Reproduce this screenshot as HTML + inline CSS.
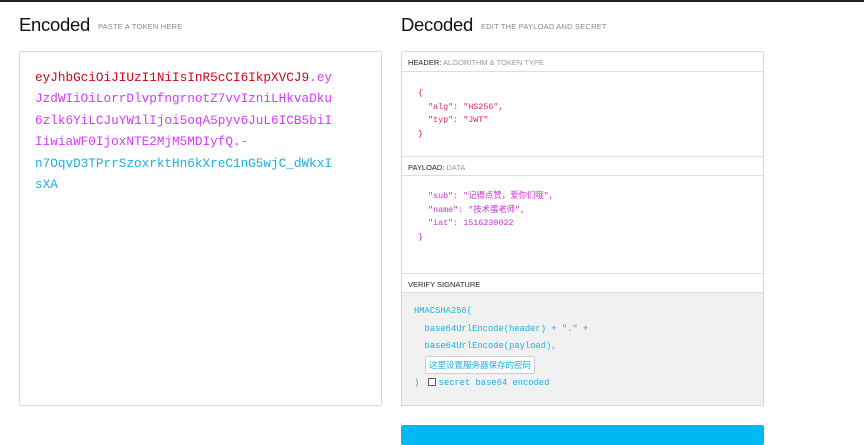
<!DOCTYPE html>
<html><head><meta charset="utf-8"><style>
*{margin:0;padding:0;box-sizing:border-box}
body{width:864px;height:437px;background:#fff;position:relative;overflow:hidden;font-family:"Liberation Sans","Noto Sans CJK SC",sans-serif}
.topbar{position:absolute;left:0;top:0;width:864px;height:2px;background:#222}
h2{position:absolute;font-weight:400;font-size:18.5px;color:#111;letter-spacing:-0.3px}
h2 small{font-size:7.5px;color:#888;margin-left:8px;letter-spacing:0.2px;vertical-align:2px}
.box{position:absolute;border:1px solid #d8d8d8;border-radius:2px}
.tok{position:absolute;left:35px;top:67px;font-family:"Liberation Mono",monospace;font-size:12.7px;line-height:21.4px;white-space:pre;color:#d63aff}
.r{color:#d0021b}.c{color:#1bb0e0}
.sec{position:absolute;left:401px;width:363px;border-left:1px solid #d8d8d8;border-right:1px solid #d8d8d8}
.ttl{height:20px;border-bottom:1px solid #ddd;border-top:1px solid #ddd;font-size:7.5px;color:#222;padding:6px 6px 0;background:#fff}
.ttl span{color:#999}
.code{position:absolute;font-family:"Liberation Mono","Noto Sans CJK SC",monospace;font-size:8.4px;line-height:13.5px;white-space:pre}
.sig{font-size:8.8px;line-height:17.5px;color:#1bb0e0}
.inp{display:inline-block;border:1px solid #ccc;background:#fff;font-family:"Noto Sans CJK SC",sans-serif;font-size:8.5px;padding:1px 3px;line-height:14px;margin-left:11px;border-radius:2px}
.cb{display:inline-block;width:8px;height:8px;border:1px solid #555;border-radius:1px;vertical-align:-1px;margin:0 3px;background:#fff}
</style></head><body>
<div class="topbar"></div>
<h2 style="left:19px;top:14px">Encoded<small>PASTE A TOKEN HERE</small></h2>
<h2 style="left:401px;top:14px">Decoded<small>EDIT THE PAYLOAD AND SECRET</small></h2>
<div class="box" style="left:19px;top:51px;width:363px;height:355px"></div>
<div class="tok"><span class="r">eyJhbGciOiJIUzI1NiIsInR5cCI6IkpXVCJ9</span>.ey
JzdWIiOiLorrDlvpfngrnotZ7vvIzniLHkvaDku
6zlk6YiLCJuYW1lIjoi5oqA5pyv6JuL6ICB5biI
IiwiaWF0IjoxNTE2MjM5MDIyfQ.<span class="c">-</span>
<span class="c">n7OqvD3TPrrSzoxrktHn6kXreC1nG5wjC_dWkxI
sXA</span></div>

<div class="sec" style="top:51px;height:106px;border-top:1px solid #d8d8d8;border-radius:2px 2px 0 0"><div class="ttl" style="border-top:none">HEADER: <span>ALGORITHM &amp; TOKEN TYPE</span></div></div>
<div class="code" style="left:418px;top:87px;color:#e0245e">{
  "alg": "HS256",
  "typ": "JWT"
}</div>
<div class="sec" style="top:156px;height:118px"><div class="ttl">PAYLOAD: <span>DATA</span></div></div>
<div class="code" style="left:418px;top:190px;color:#c82fd8">  "sub": "记得点赞，爱你们哦",
  "name": "技术蛋老师",
  "iat": 1516239022
}</div>
<div class="sec" style="top:273px;height:133px;background:#f1f1f1;border-bottom:1px solid #d8d8d8"><div class="ttl">VERIFY SIGNATURE</div></div>
<div class="code sig" style="left:414px;top:303px">HMACSHA256(
  base64UrlEncode(header) + "." +
  base64UrlEncode(payload),
<span class="inp">这里设置服务器保存的密码</span>
) <span class="cb"></span>secret base64 encoded</div>
<div style="position:absolute;left:401px;top:425px;width:363px;height:20px;background:#00b9f1;border-radius:2px"></div>
</body></html>
